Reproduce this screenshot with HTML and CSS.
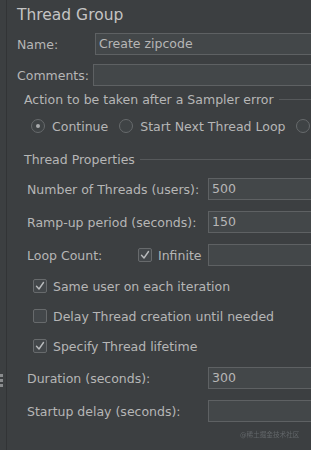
FILE: index.html
```html
<!DOCTYPE html>
<html>
<head>
<meta charset="utf-8">
<link rel="stylesheet" href="styles.css">
</head>
<body>
<div class="app">
  <div class="splitter">
    <span class="grip"></span><span class="grip"></span><span class="grip"></span>
  </div>
  <div class="panel">
    <div class="title">Thread Group</div>

    <div class="row r-name">
      <span class="label w-name">Name:</span>
      <div class="input name-input">Create zipcode</div>
    </div>
    <div class="row r-comments">
      <span class="label w-comments">Comments:</span>
      <div class="input"></div>
    </div>

    <div class="group-title r-action">
      <span>Action to be taken after a Sampler error</span><span class="rule"></span>
    </div>
    <div class="radios r-radios">
      <span class="radio on"></span><span class="rtext">Continue</span>
      <span class="radio"></span><span class="rtext">Start Next Thread Loop</span>
      <span class="radio"></span>
    </div>

    <div class="group-title r-props">
      <span>Thread Properties</span><span class="rule"></span>
    </div>

    <div class="row prop r-threads">
      <span class="label w-prop">Number of Threads (users):</span>
      <div class="input">500</div>
    </div>
    <div class="row prop r-ramp">
      <span class="label w-prop">Ramp-up period (seconds):</span>
      <div class="input">150</div>
    </div>
    <div class="row prop r-loop">
      <span class="label w-loop">Loop Count:</span>
      <span class="check on"><svg viewBox="0 0 14 14" width="14" height="14"><polyline points="3.5,7.2 6,10 10.5,3.5"/></svg></span>
      <span class="infinite">Infinite</span>
      <div class="input"></div>
    </div>

    <div class="checkrow r-same">
      <span class="check on"><svg viewBox="0 0 14 14" width="14" height="14"><polyline points="3.5,7.2 6,10 10.5,3.5"/></svg></span>
      <span>Same user on each iteration</span>
    </div>
    <div class="checkrow r-delay">
      <span class="check"></span>
      <span>Delay Thread creation until needed</span>
    </div>
    <div class="checkrow r-spec">
      <span class="check on"><svg viewBox="0 0 14 14" width="14" height="14"><polyline points="3.5,7.2 6,10 10.5,3.5"/></svg></span>
      <span>Specify Thread lifetime</span>
    </div>

    <div class="row prop r-dur">
      <span class="label w-prop">Duration (seconds):</span>
      <div class="input">300</div>
    </div>
    <div class="row prop r-start">
      <span class="label w-prop">Startup delay (seconds):</span>
      <div class="input"></div>
    </div>
  </div>
</div>
<div class="watermark">@稀土掘金技术社区</div>
</body>
</html>
```

FILE: styles.css
```css
html, body {
  margin: 0;
  padding: 0;
  width: 311px;
  height: 450px;
  overflow: hidden;
  background: #3c3f41;
}
body {
  position: relative;
  font-family: "DejaVu Sans", "Noto Sans CJK SC", sans-serif;
  font-size: 12.5px;
  color: #b6b6b6;
}
.app {
  display: flex;
  height: 450px;
}
.splitter {
  width: 6px;
  flex: none;
  display: flex;
  flex-direction: column;
  justify-content: flex-start;
  align-items: flex-start;
  gap: 2px;
  padding-top: 374px;
  box-sizing: border-box;
}
.grip {
  width: 3px;
  height: 3px;
  background: #8a8c8e;
}
.panel {
  flex: 1;
  border-left: 1px solid #323436;
  display: flex;
  flex-direction: column;
  padding-left: 10px;
  min-width: 0;
  overflow: hidden;
}
.title {
  font-size: 15.5px;
  color: #c4c4c4;
  height: 20px;
  line-height: 20px;
  margin-top: 5px;
  white-space: nowrap;
}
.row {
  display: flex;
  align-items: center;
  height: 22px;
  margin-right: -30px;
  white-space: nowrap;
}
.label {
  flex: none;
}
.w-name { width: 78px; }
.w-comments { width: 76px; }
.prop { padding-left: 10px; }
.w-prop { width: 181px; }
.w-loop { width: 111px; }
.input {
  flex: 1;
  height: 22px;
  box-sizing: border-box;
  border: 1px solid #5e6163;
  background: #434749;
  padding: 0 3px;
  line-height: 20px;
  color: #b6b6b6;
}
.r-name { margin-top: 8px; }
.r-comments { margin-top: 9px; }

.group-title {
  display: flex;
  align-items: center;
  height: 14px;
  line-height: 14px;
  padding-left: 7px;
  white-space: nowrap;
  margin-right: -30px;
}
.rule {
  flex: 1;
  height: 1px;
  background: #56595b;
  margin-left: 5px;
  margin-top: -1px;
}
.r-action { margin-top: 7px; }
.r-props { margin-top: 20px; }

.radios {
  display: flex;
  align-items: center;
  height: 14px;
  margin-top: 12px;
  padding-left: 14px;
  white-space: nowrap;
}
.radio {
  flex: none;
  width: 14px;
  height: 14px;
  box-sizing: border-box;
  border: 1px solid #676a6c;
  border-radius: 50%;
  background: #3f4345;
  display: flex;
  align-items: center;
  justify-content: center;
}
.radio.on::after {
  content: "";
  width: 4px;
  height: 4px;
  border-radius: 50%;
  background: #a9abad;
}
.rtext {
  margin-left: 7px;
  margin-right: 11px;
}

.r-threads { margin-top: 11px; }
.r-ramp { margin-top: 11px; }
.r-loop { margin-top: 11px; }
.r-dur { margin-top: 14px; }
.r-start { margin-top: 11px; }

.check {
  flex: none;
  width: 14px;
  height: 14px;
  box-sizing: border-box;
  border: 1px solid #676a6c;
  border-radius: 2px;
  background: #43474a;
  display: flex;
  align-items: center;
  justify-content: center;
}
.check svg {
  display: block;
  margin: -1px;
}
.check polyline {
  fill: none;
  stroke: #b8babc;
  stroke-width: 1.4;
  stroke-linecap: round;
  stroke-linejoin: round;
}
.infinite {
  width: 50px;
  flex: none;
  margin-left: 6px;
}
.checkrow {
  display: flex;
  align-items: center;
  height: 14px;
  padding-left: 16px;
  white-space: nowrap;
  gap: 6px;
}
.r-same { margin-top: 13px; }
.r-delay { margin-top: 16px; }
.r-spec { margin-top: 16px; }

.watermark {
  position: absolute;
  left: 240px;
  top: 430px;
  font-size: 6.6px;
  line-height: 10px;
  color: #63676a;
  white-space: nowrap;
  filter: blur(0.3px);
}
```
